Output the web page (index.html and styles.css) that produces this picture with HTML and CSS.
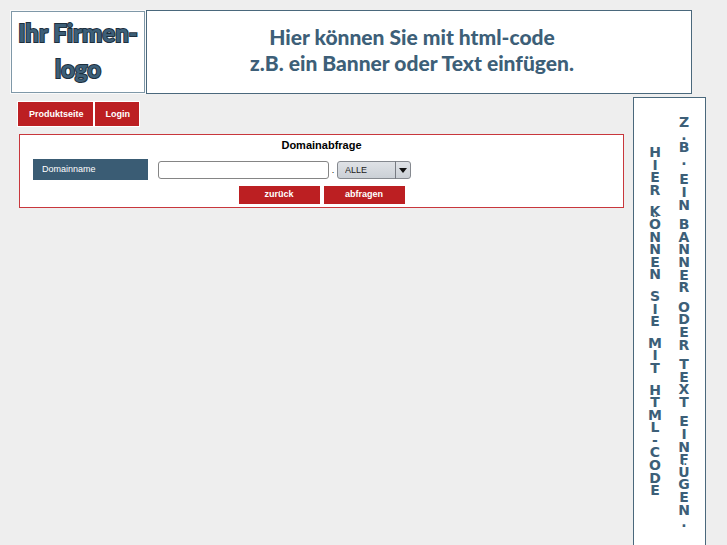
FILE: index.html
```html
<!DOCTYPE html>
<html lang="de">
<head>
<meta charset="utf-8">
<title>Domainabfrage</title>
<link rel="stylesheet" href="styles.css">
</head>
<body>
<header class="top">
  <div class="logo">Ihr Firmen-<br>logo</div>
  <div class="banner">Hier können Sie mit html-code<br>z.B. ein Banner oder Text einfügen.</div>
</header>
<div class="content">
  <main class="main">
    <nav class="tabs">
      <a class="tab" href="#produkte">Produktseite</a>
      <a class="tab" href="#login">Login</a>
    </nav>
    <form class="panel">
      <h1 class="title">Domainabfrage</h1>
      <div class="row">
        <label class="label" for="domain">Domainname</label>
        <input class="field" id="domain" type="text">
        <span class="dot">.</span>
        <div class="picker">
          <select class="select" aria-label="Domainendung"><option>ALLE</option></select>
          <svg class="arrow" viewBox="0 0 16 18" aria-hidden="true"><path d="M0.5 0V18" stroke="#777b82"/><path d="M4 7H12L8 12Z" fill="#111"/></svg>
        </div>
      </div>
      <div class="actions">
        <button class="button" type="button">zurück</button>
        <button class="button" type="button">abfragen</button>
      </div>
    </form>
  </main>
  <aside class="side">
    <p class="column column-left"><span class="word">HIER</span> <span class="word">KÖNNEN</span> <span class="word">SIE</span> <span class="word">MIT</span> <span class="word">HTML-CODE</span></p>
    <p class="column column-right"><span class="word">Z.B.</span> <span class="word">EIN</span> <span class="word">BANNER</span> <span class="word">ODER</span> <span class="word">TEXT</span> <span class="word">EINFÜGEN.</span></p>
  </aside>
</div>
</body>
</html>
```

FILE: styles.css
```css
* { box-sizing: border-box; }

body {
  margin: 0;
  height: 100vh;
  overflow: hidden;
  display: flex;
  flex-direction: column;
  background: #eeeeee;
  color: #000;
  font-family: "Liberation Sans", Arial, sans-serif;
  font-size: 9px;
}

.top {
  display: flex;
  align-items: center;
  gap: 1px;
  padding: 10px 35px 0 11px;
}

.logo {
  flex: 0 0 134px;
  padding: 3px 0 5px;
  border: 1px solid #7f98a8;
  outline: 1px solid #fafafa;
  background: #fff;
  color: #3d5f78;
  font-family: Lato, sans-serif;
  font-size: 24px;
  font-weight: 900;
  line-height: 36px;
  text-align: center;
  white-space: nowrap;
  -webkit-text-stroke: 2px #1d2f3d;
  paint-order: stroke fill;
}

.banner {
  flex: 1;
  padding: 13px 14px 17px 0;
  border: 1px solid #4a687c;
  background: #fff;
  color: #3d5f78;
  font-family: Lato, sans-serif;
  font-size: 21px;
  font-weight: 900;
  line-height: 26px;
  text-align: center;
}

.content {
  flex: 1;
  display: flex;
  gap: 9px;
  min-height: 0;
  padding: 3px 21px 0 17px;
}

.main { flex: 1; padding-top: 4px; }

.tabs {
  display: inline-flex;
  gap: 2px;
  padding: 1px;
  background: #fff;
}

.tab {
  padding: 0 9px 0 11px;
  background: #bc1f22;
  color: #fff;
  font-weight: bold;
  line-height: 24px;
  text-decoration: none;
}

.panel {
  margin: 7px 0 0 2px;
  padding: 3px 13px;
  border: 1px solid #c8373c;
  background: #fff;
}

.title {
  margin: 0;
  font-size: 11px;
  line-height: 15px;
  text-align: center;
}

.row {
  display: flex;
  align-items: center;
  margin-top: 6px;
}

.label {
  width: 115px;
  margin-right: 10px;
  padding-left: 9px;
  background: #3a5c74;
  color: #fff;
  line-height: 21px;
}

.field {
  width: 171px;
  height: 18px;
  border: 1px solid #858585;
  border-radius: 3px;
  background: #fff;
  font: inherit;
}

.dot { width: 8px; text-align: center; }

.picker { position: relative; }

.select {
  display: block;
  width: 74px;
  height: 18px;
  padding: 0 7px;
  appearance: none;
  border: 1px solid #85898f;
  border-radius: 3px;
  background: linear-gradient(#dfe2e6, #cbd0d6);
  color: #222;
  font: 9px "Liberation Sans", Arial, sans-serif;
}

.arrow {
  position: absolute;
  top: 0;
  right: 0;
  width: 16px;
  height: 18px;
  pointer-events: none;
}

.actions {
  display: flex;
  justify-content: center;
  gap: 4px;
  margin: 6px 0 0;
}

.button {
  width: 81px;
  height: 18px;
  padding: 0 0 2px;
  border: 0;
  background: #bc1f22;
  color: #fff;
  font: bold 9px "Liberation Sans", Arial, sans-serif;
}

.side {
  flex: 0 0 73px;
  display: flex;
  justify-content: center;
  gap: 15px;
  border: 1px solid #4a687c;
  border-bottom: 0;
  background: #fff;
  color: #3d5f78;
  font-family: "DejaVu Sans", sans-serif;
  font-size: 14px;
  font-weight: bold;
  line-height: 0.9;
}

.column {
  display: flex;
  flex-direction: column;
  width: 14px;
  margin: 0;
}

.column-left { gap: 9px; padding-top: 48px; }

.column-right { gap: 7px; padding-top: 18px; }

.word {
  text-align: center;
  line-break: anywhere;
}
```
